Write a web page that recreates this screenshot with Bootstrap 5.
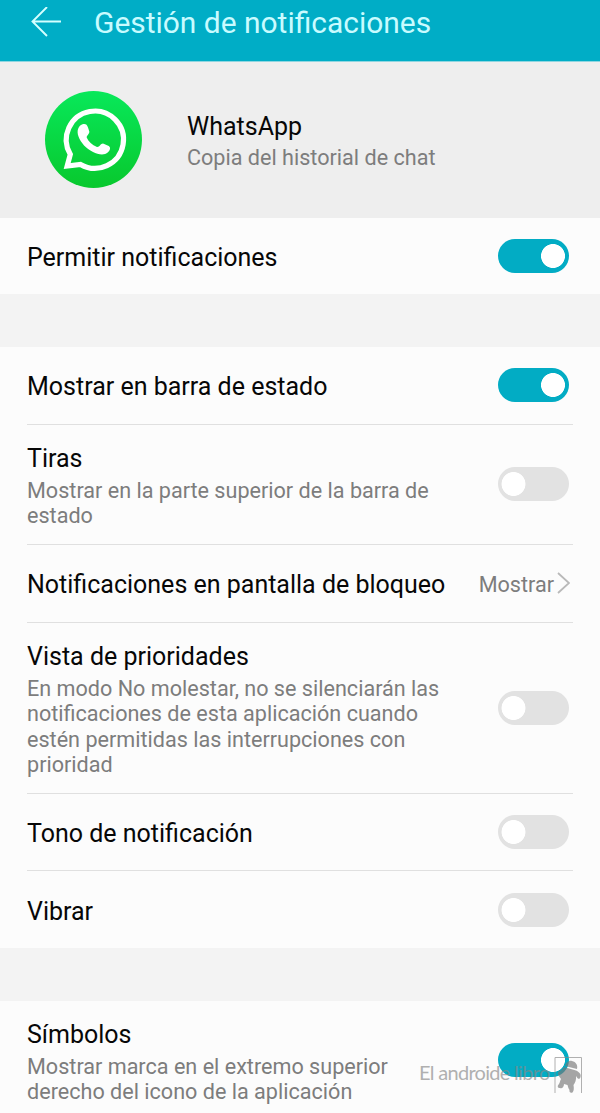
<!DOCTYPE html>
<html lang="es">
<head>
<meta charset="utf-8">
<meta name="viewport" content="width=device-width, initial-scale=1">
<title>Gestión de notificaciones</title>
<link href="https://cdn.jsdelivr.net/npm/bootstrap@5.3.0/dist/css/bootstrap.min.css" rel="stylesheet">
<style>
  body { font-family: Roboto, "Liberation Sans", sans-serif; background: #fcfcfc; color: #0a0a0a; overflow: hidden; }
  .screen { width: 600px; height: 1113px; }
  .topbar { height: 62px; background: #00adc6; padding: 0 0 16px 30px; border-bottom: 1px solid #8fd6e0; }
  .topbar h1 { font-size: 29.95px; font-weight: 400; line-height: 36px; color: #c8fbff; margin-left: 32px; }
  .app-head { height: 156px; background: #eee; padding: 0 0 1px 44px; }
  .app-copy { margin-left: 44px; padding-top: 4px; }
  .app-copy .sub { margin-top: 3px; }
  .ttl { font-size: 25px; line-height: 30px; color: #070707; white-space: nowrap; }
  .sub { font-size: 21.6px; line-height: 25.6px; color: #7d7d7d; white-space: nowrap; }
  .gap-band { background: #f3f3f3; height: 53px; }
  .opts { padding: 0 27px; }
  .opt { border-bottom: 1px solid #e0e0e0; padding-right: 4px; }
  .opt:last-child { border-bottom: 0; }
  .opt-copy { padding-top: 4px; }
  .h-1l { height: 77.7px; }
  .h-2l { height: 120px; }
  .h-4l { height: 171px; }
  .h-lock { height: 78px; }
  .h-last { height: 118px; padding-bottom: 0; }
  .opt .form-check-input {
    width: 71px; height: 34px; margin: 0; border: 0; float: none; border-radius: 17px;
    background-color: #e2e2e2; background-repeat: no-repeat; background-size: 100% 100%;
    background-image: radial-gradient(circle at 15.5px 17px, #fff 11.6px, transparent 12.3px);
  }
  .opt .form-check-input:checked {
    background-color: #02acc4;
    background-image: radial-gradient(circle at 55px 17px, #fff 11.6px, transparent 12.3px);
  }
  .wm { left: 419px; top: 1055px; color: #888; opacity: .65; }
  .wm span { font-family: Lato, sans-serif; font-size: 20px; letter-spacing: -.7px; line-height: 34px; width: 135px; white-space: nowrap; }
</style>
</head>
<body>
<div class="screen position-relative d-flex flex-column overflow-hidden">
  <header class="topbar d-flex align-items-center flex-shrink-0">
    <svg width="32" height="32" viewBox="0 0 32 32" fill="none" stroke="#d5ffff" stroke-width="1.9"><path d="M31 14.500H2.500M17 0 2.500 14.500 17 29"/></svg>
    <h1 class="mb-0">Gestión de notificaciones</h1>
  </header>

  <section class="app-head d-flex align-items-center flex-shrink-0">
    <svg width="99" height="99" viewBox="0 0 99 99">
      <defs><linearGradient id="green" x1="0" y1="0" x2="0" y2="1"><stop offset="0" stop-color="#08e85a"/><stop offset="1" stop-color="#08c82d"/></linearGradient></defs>
      <circle cx="49.5" cy="49.5" r="48.5" fill="url(#green)"/>
      <path d="M23.200 76 26.300 64.300A28.600 28.600 0 1 1 36.500 74.400Z" fill="none" stroke="#fff" stroke-width="5.2"/>
      <path d="M38.500 34.300C41.500 33.500 43 34.500 44 37.500L45.300 41.500C45.500 44 42.500 45.500 42.700 47.500C44.500 51.500 48 55 53 57C55.500 57.300 56.500 53.500 59 53.500L64.800 56C67 57.500 66 60.500 64 62.300C60 66 54 64.500 49 62C42 58.500 37 53 34.500 46.500C32.500 41 34 36 38.500 34.300Z" fill="#fff"/>
    </svg>
    <div class="app-copy">
      <div class="ttl">WhatsApp</div>
      <div class="sub">Copia del historial de chat</div>
    </div>
  </section>

  <section class="opts flex-shrink-0">
    <div class="opt form-switch d-flex align-items-center justify-content-between ps-0" style="height:76px">
      <div class="ttl opt-copy">Permitir notificaciones</div>
      <input class="form-check-input" type="checkbox" role="switch" checked aria-label="Permitir notificaciones">
    </div>
  </section>

  <div class="gap-band flex-shrink-0"></div>

  <section class="opts flex-shrink-0">
    <div class="opt h-1l form-switch d-flex align-items-center justify-content-between ps-0">
      <div class="ttl opt-copy">Mostrar en barra de estado</div>
      <input class="form-check-input" type="checkbox" role="switch" checked aria-label="Mostrar en barra de estado">
    </div>
    <div class="opt h-2l form-switch d-flex align-items-center justify-content-between ps-0">
      <div class="opt-copy">
        <div class="ttl">Tiras</div>
        <div class="sub mt-1">Mostrar en la parte superior de la barra de<br>estado</div>
      </div>
      <input class="form-check-input" type="checkbox" role="switch" aria-label="Tiras">
    </div>
    <div class="opt h-lock d-flex align-items-center justify-content-between pe-0">
      <div class="ttl opt-copy">Notificaciones en pantalla de bloqueo</div>
      <div class="d-flex align-items-center" style="margin-right:3px">
        <span class="sub opt-copy">Mostrar</span>
        <svg style="margin-left:3px" width="13" height="22" viewBox="0 0 13 22" fill="none" stroke="#b9b9b9" stroke-width="1.8"><path d="M1 1 12 11 1 21"/></svg>
      </div>
    </div>
    <div class="opt h-4l form-switch d-flex align-items-center justify-content-between ps-0">
      <div class="opt-copy">
        <div class="ttl">Vista de prioridades</div>
        <div class="sub mt-1">En modo No molestar, no se silenciarán las<br>notificaciones de esta aplicación cuando<br>estén permitidas las interrupciones con<br>prioridad</div>
      </div>
      <input class="form-check-input" type="checkbox" role="switch" aria-label="Vista de prioridades">
    </div>
    <div class="opt h-1l form-switch d-flex align-items-center justify-content-between ps-0">
      <div class="ttl opt-copy">Tono de notificación</div>
      <input class="form-check-input" type="checkbox" role="switch" aria-label="Tono de notificación">
    </div>
    <div class="opt form-switch d-flex align-items-center justify-content-between ps-0" style="height:77px">
      <div class="ttl opt-copy">Vibrar</div>
      <input class="form-check-input" type="checkbox" role="switch" aria-label="Vibrar">
    </div>
  </section>

  <div class="gap-band flex-shrink-0"></div>

  <section class="opts flex-shrink-0">
    <div class="opt h-last form-switch d-flex align-items-center justify-content-between ps-0">
      <div class="opt-copy">
        <div class="ttl">Símbolos</div>
        <div class="sub mt-1">Mostrar marca en el extremo superior<br>derecho del icono de la aplicación</div>
      </div>
      <input class="form-check-input" type="checkbox" role="switch" checked aria-label="Símbolos">
    </div>
  </section>

  <!-- Site watermark laid over the last row -->
  <div class="wm position-absolute d-flex align-items-start">
    <span>El androide libro</span>
    <svg width="29" height="40" viewBox="0 0 29 40">
      <path d="M1 38V2.500H27.500V38" fill="none" stroke="#888" stroke-width="1"/>
      <path d="M11 11C12 7 15 5 18 6C22 7 24 10 23 14Z" fill="#777"/>
      <path d="M10 12 22 15.500C25 17 27.500 19 26.500 22C26 24.500 24 24 23 22.500L22 21C22.500 25 21 28 19.500 30C20 33 20 36 18.500 37.500C16.500 38.500 15 37 15.500 35C14 33 14 31 13.500 30L10 29C10 32 8 34 6 33C3.500 33 3 31 5 29C6 27 6 26 7 24L4.500 20.500C3 18 4.500 15.500 7 15.500Z" fill="#777"/>
    </svg>
  </div>
</div>
<script src="https://cdn.jsdelivr.net/npm/bootstrap@5.3.0/dist/js/bootstrap.bundle.min.js"></script>
</body>
</html>
